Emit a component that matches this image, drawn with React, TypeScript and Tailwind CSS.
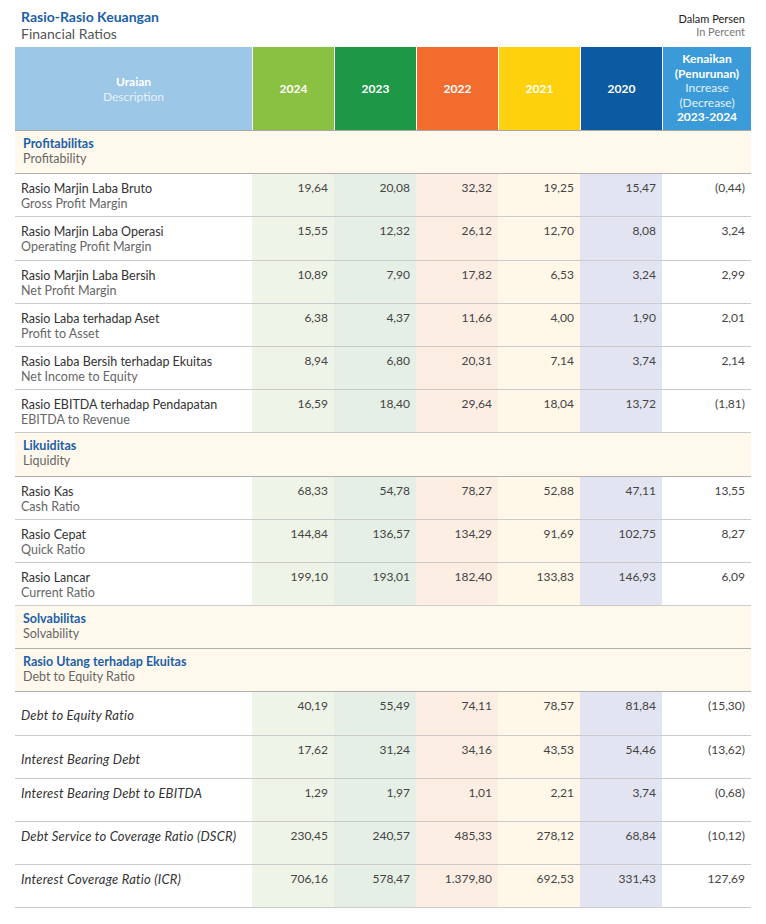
import React from "react";

type Row =
  | { kind: "section"; id: string; en: string }
  | { kind: "data"; id?: string; en: string; italic?: boolean; low?: boolean; vals: string[] };

const rows: Row[] = [
  { kind: "section", id: "Profitabilitas", en: "Profitability" },
  { kind: "data", id: "Rasio Marjin Laba Bruto", en: "Gross Profit Margin", vals: ["19,64", "20,08", "32,32", "19,25", "15,47", "(0,44)"] },
  { kind: "data", id: "Rasio Marjin Laba Operasi", en: "Operating Profit Margin", vals: ["15,55", "12,32", "26,12", "12,70", "8,08", "3,24"] },
  { kind: "data", id: "Rasio Marjin Laba Bersih", en: "Net Profit Margin", vals: ["10,89", "7,90", "17,82", "6,53", "3,24", "2,99"] },
  { kind: "data", id: "Rasio Laba terhadap Aset", en: "Profit to Asset", vals: ["6,38", "4,37", "11,66", "4,00", "1,90", "2,01"] },
  { kind: "data", id: "Rasio Laba Bersih terhadap Ekuitas", en: "Net Income to Equity", vals: ["8,94", "6,80", "20,31", "7,14", "3,74", "2,14"] },
  { kind: "data", id: "Rasio EBITDA terhadap Pendapatan", en: "EBITDA to Revenue", vals: ["16,59", "18,40", "29,64", "18,04", "13,72", "(1,81)"] },
  { kind: "section", id: "Likuiditas", en: "Liquidity" },
  { kind: "data", id: "Rasio Kas", en: "Cash Ratio", vals: ["68,33", "54,78", "78,27", "52,88", "47,11", "13,55"] },
  { kind: "data", id: "Rasio Cepat", en: "Quick Ratio", vals: ["144,84", "136,57", "134,29", "91,69", "102,75", "8,27"] },
  { kind: "data", id: "Rasio Lancar", en: "Current Ratio", vals: ["199,10", "193,01", "182,40", "133,83", "146,93", "6,09"] },
  { kind: "section", id: "Solvabilitas", en: "Solvability" },
  { kind: "section", id: "Rasio Utang terhadap Ekuitas", en: "Debt to Equity Ratio" },
  { kind: "data", en: "Debt to Equity Ratio", italic: true, low: true, vals: ["40,19", "55,49", "74,11", "78,57", "81,84", "(15,30)"] },
  { kind: "data", en: "Interest Bearing Debt", italic: true, low: true, vals: ["17,62", "31,24", "34,16", "43,53", "54,46", "(13,62)"] },
  { kind: "data", en: "Interest Bearing Debt to EBITDA", italic: true, vals: ["1,29", "1,97", "1,01", "2,21", "3,74", "(0,68)"] },
  { kind: "data", en: "Debt Service to Coverage Ratio (DSCR)", italic: true, vals: ["230,45", "240,57", "485,33", "278,12", "68,84", "(10,12)"] },
  { kind: "data", en: "Interest Coverage Ratio (ICR)", italic: true, vals: ["706,16", "578,47", "1.379,80", "692,53", "331,43", "127,69"] },
];

const tints = ["bg-[#eef4e7]", "bg-[#e5efe6]", "bg-[#fdeee4]", "bg-[#fff7e8]", "bg-[#e2e4f1]", "bg-white"];

const years = [
  { y: "2024", bg: "bg-[#8bc143]" },
  { y: "2023", bg: "bg-[#1e9747]" },
  { y: "2022", bg: "bg-[#f26c2d]" },
  { y: "2021", bg: "bg-[#fdd20d]" },
  { y: "2020", bg: "bg-[#0b5aa2]" },
];

const cols = "grid grid-cols-[237px_82px_82px_82px_82px_82px_1fr]";

export default function App() {
  return (
    <div className="min-h-[924px] bg-white px-[15px] pt-[8px] font-['Lato',sans-serif] text-[12px]">
      <div className="flex items-start justify-between">
        <div className="pl-[6px]">
          <div className="text-[14px] font-bold leading-[17px] text-[#1c5fa8]">Rasio-Rasio Keuangan</div>
          <div className="text-[14px] leading-[17px] text-[#555]">Financial Ratios</div>
        </div>
        <div className="pt-[4px] pr-[6px] text-right text-[11px] leading-[13px]">
          <div className="text-[#222]">Dalam Persen</div>
          <div className="text-[#777]">In Percent</div>
        </div>
      </div>

      <div className={`${cols} mt-[5px] h-[84px] border-b border-[#a8a8a8] text-white`}>
        <div className="flex flex-col items-center justify-center bg-[#9cc7e6] leading-[15px]">
          <span className="font-bold">Uraian</span>
          <span className="text-[#e6f1fa]">Description</span>
        </div>
        {years.map((c) => (
          <div key={c.y} className={`flex items-center justify-center border-l border-white font-bold ${c.bg}`}>
            {c.y}
          </div>
        ))}
        <div className="flex flex-col items-center justify-center border-l border-white bg-[#3b9bd9] leading-[14.5px]">
          <span className="font-bold">Kenaikan</span>
          <span className="font-bold">(Penurunan)</span>
          <span className="text-[#e4f1fb]">Increase</span>
          <span className="text-[#e4f1fb]">(Decrease)</span>
          <span className="font-bold">2023-2024</span>
        </div>
      </div>

      {rows.map((r, i) =>
        r.kind === "section" ? (
          <div key={i} className="h-[43.2px] border-b border-[#b0b0b0] bg-[#fef9ec] pl-[8px] pt-[6px] text-[12.5px] leading-[14.5px]">
            <div className="font-bold text-[#1c5fa8]">{r.id}</div>
            <div className="text-[#666]">{r.en}</div>
          </div>
        ) : (
          <div key={i} className={`${cols} h-[43.2px] border-b border-[#cbcbcb]`}>
            <div className={`pl-[6px] leading-[15px] ${r.low ? "pt-[16px]" : "pt-[7px]"}`}>
              {r.id ? (
                <>
                  <div className="text-[12.5px] text-[#333]">{r.id}</div>
                  <div className="text-[12.5px] text-[#666]">{r.en}</div>
                </>
              ) : (
                <div className="text-[13px] tracking-[0.2px] italic text-[#333]">{r.en}</div>
              )}
            </div>
            {r.vals.map((v, j) => (
              <div key={j} className={`pr-[6px] pt-[6px] text-right leading-[16px] text-[#444] ${tints[j]}`}>
                {v}
              </div>
            ))}
          </div>
        )
      )}
    </div>
  );
}
